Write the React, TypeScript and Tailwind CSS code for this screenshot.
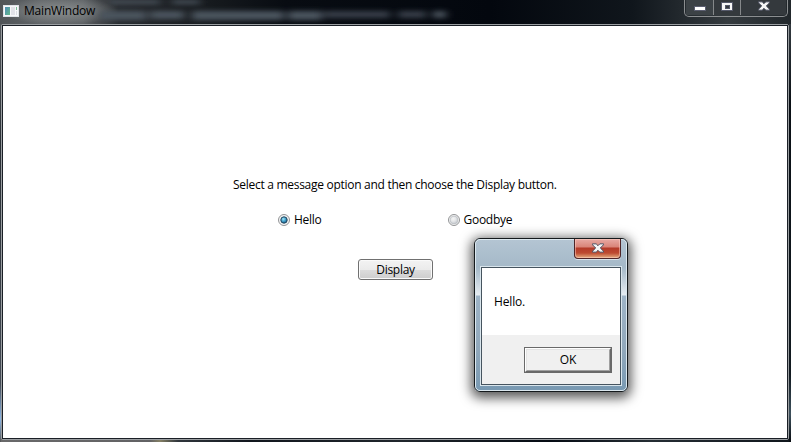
import React from "react";

function AppIcon() {
  return (
    <svg className="ml-[3px] mt-[5px] block" width="16" height="12" viewBox="0 0 16 12" shapeRendering="crispEdges">
      <defs>
        <linearGradient id="pane" x1="0" y1="0" x2="1" y2="1">
          <stop offset="0" stopColor="#4f8bb5" />
          <stop offset="1" stopColor="#62b98a" />
        </linearGradient>
      </defs>
      <rect width="16" height="12" fill="#dfe3e8" />
      <rect x="1" y="1" width="14" height="10" fill="#f6f7f9" />
      <rect x="2" y="2" width="5" height="8" fill="url(#pane)" />
      <rect x="8" y="2" width="4" height="8" fill="#e1e2e8" />
      <rect x="13" y="2" width="1" height="3" fill="#79bd96" />
      <rect x="13" y="6" width="1" height="4" fill="#d9dce2" />
    </svg>
  );
}

function Cross({ dark = "#42485a" }: { dark?: string }) {
  const d = "M0 0h4l2 2 2-2h4v1L8.500 4.500 12 8v1H8L6 7 4 9H0V8l3.500-3.500L0 1z";
  return (
    <svg className="block" width="12" height="10" viewBox="-0.500 -0.500 13 10">
      <path d={d} fill="#f5f5f5" stroke={dark} strokeWidth="1" />
    </svg>
  );
}

function GlassSmudges() {
  return (
    <svg className="absolute left-0 top-0" width="791" height="24" viewBox="0 0 791 24">
      <defs>
        <filter id="soft" filterUnits="userSpaceOnUse" x="0" y="-20" width="791" height="70">
          <feGaussianBlur stdDeviation="4 2.500" />
        </filter>
        <linearGradient id="glass" x1="0" y1="0" x2="1" y2="0">
          <stop offset="0" stopColor="#505457" />
          <stop offset="0.050" stopColor="#606467" />
          <stop offset="0.105" stopColor="#5e6265" />
          <stop offset="0.150" stopColor="#26292d" />
          <stop offset="0.280" stopColor="#14181c" />
          <stop offset="0.360" stopColor="#080c12" />
          <stop offset="0.620" stopColor="#03070e" />
          <stop offset="0.800" stopColor="#10161c" />
          <stop offset="0.920" stopColor="#353b3f" />
          <stop offset="1" stopColor="#22282c" />
        </linearGradient>
        <radialGradient id="halo">
          <stop offset="0" stopColor="#969a9b" stopOpacity="0.850" />
          <stop offset="0.600" stopColor="#85898a" stopOpacity="0.500" />
          <stop offset="1" stopColor="#85898a" stopOpacity="0" />
        </radialGradient>
      </defs>
      <rect width="791" height="24" fill="url(#glass)" />
      <ellipse cx="60" cy="11" rx="58" ry="14" fill="url(#halo)" />
      <g filter="url(#soft)" fill="#4b555f">
        <rect x="110" y="0" width="50" height="4" />
        <rect x="172" y="0" width="28" height="4" />
        <rect x="100" y="11" width="46" height="9" />
        <rect x="150" y="11" width="34" height="8" />
        <rect x="192" y="11" width="92" height="9" />
        <rect x="288" y="11" width="34" height="9" />
        <rect x="324" y="11" width="66" height="7" opacity="0.700" />
        <rect x="398" y="11" width="28" height="7" opacity="0.700" />
        <rect x="433" y="11" width="13" height="7" />
      </g>
    </svg>
  );
}

function Caption() {
  return (
    <header className="relative flex h-6 shrink-0 justify-between">
      <GlassSmudges />
      <div className="relative flex">
        <AppIcon />
        <span className="ml-[5px] mt-[3px] text-[12px] leading-4 tracking-[-0.200px] text-black">MainWindow</span>
      </div>
      <div className="relative mr-[3px] flex h-[17px] w-[104px] rounded-b-[5px] border border-t-0 border-[#8b8e90] p-px pt-0">
        <div className="flex w-[28px] justify-center border-r border-[#85888a] bg-[#3c4246]">
          <span className="mt-[6px] h-[5px] w-3 border border-[#5b5e70] bg-white" />
        </div>
        <div className="flex w-[27px] justify-center border-r border-[#85888a] bg-[#34393d]">
          <svg className="mt-[2px]" width="12" height="9" shapeRendering="crispEdges">
            <path fillRule="evenodd" d="M.5 .5h11v8H.5z M4 3v3h4V3z" fill="#f7f7f7" stroke="#55596a" />
          </svg>
        </div>
        <div className="flex flex-1 justify-center bg-[#34393d] pt-px">
          <Cross />
        </div>
      </div>
    </header>
  );
}

function Radio({ label, checked = false }: { label: string; checked?: boolean }) {
  return (
    <label className="flex h-4 w-[169.500px] items-center">
      <svg className="shrink-0" width="12" height="12" viewBox="0 0 12 12">
        <defs>
          <radialGradient id={checked ? "dot-on" : "dot-off"} cx="0.4" cy="0.35" r="0.65">
            <stop offset="0" stopColor={checked ? "#a7e7fa" : "#f5f5f5"} />
            <stop offset="0.5" stopColor={checked ? "#45a6cf" : "#e4e6e8"} />
            <stop offset="1" stopColor={checked ? "#155b88" : "#c5c9ce"} />
          </radialGradient>
        </defs>
        <circle cx="6" cy="6" r="5.500" fill="#f4f4f4" stroke="#929496" />
        <circle
          cx="6"
          cy="6"
          r={checked ? 3.2 : 3.9}
          fill={checked ? "url(#dot-on)" : "url(#dot-off)"}
          stroke={checked ? "#24475f" : "#b9bdc2"}
          strokeWidth={checked ? 1 : 0.7}
        />
      </svg>
      <span className="ml-1 text-[12px] leading-4 tracking-[-0.280px]">{label}</span>
    </label>
  );
}

function MessageBox() {
  return (
    <section className="absolute left-[474px] top-[238px] flex h-[154px] w-[154px] flex-col rounded-[6px] border border-[#14191c] bg-[linear-gradient(180deg,#b4c5d3_0,#a5b9c8_28px,#b5c6d3_36px,#e6ecf1_56px,#9eb4c7_57px,#91a8bb_110px,#7899b2_100%)] shadow-[0_3px_12px_3px_rgba(0,0,0,0.65)]">
      <div className="flex h-full flex-col rounded-[5px] border border-[#dce8ef] px-1 pb-1">
        <div className="-mt-px flex h-[27px] shrink-0 justify-end pr-px">
          <button className="flex h-5 w-[47px] justify-center rounded-b-[4px] border border-t-0 border-[#4e2528] bg-[linear-gradient(180deg,#e8aaa4_0,#d98478_8px,#b43a29_9px,#bd4a30_14px,#e4ae80_19px)] pt-1 shadow-[inset_0_0_0_1px_rgba(255,210,200,0.5),0_1px_0_#d7e3eb]">
            <Cross />
          </button>
        </div>
        <div className="flex flex-1 flex-col border border-[#d9e5ec]">
          <div className="flex flex-1 flex-col border border-[#46545f] bg-white">
            <div className="h-[67px] pl-3 pt-[26px] text-[12px] leading-4 tracking-[-0.150px]">Hello.</div>
            <div className="flex flex-1 justify-end bg-[#f0f0f0] pr-2 pt-3">
              <button className="h-[26px] w-[88px] border border-[#696969] text-[12px] leading-4">
                <span className="flex h-full items-center justify-center border border-b-[#696969] border-l-white border-r-[#696969] border-t-white">
                  <span className="flex h-full w-full items-center justify-center border border-b-[#a0a0a0] border-l-[#e3e3e3] border-r-[#a0a0a0] border-t-[#e3e3e3]">
                    OK
                  </span>
                </span>
              </button>
            </div>
          </div>
        </div>
      </div>
    </section>
  );
}

export default function App() {
  return (
    <div className="relative flex h-[442px] w-[791px] flex-col overflow-hidden bg-[#050a10] font-['Open_Sans','Noto_Sans',sans-serif] text-black">
      <Caption />
      <div className="flex h-[418px] bg-[linear-gradient(90deg,#69696a_0,#626264_150px,#858065_160px,#30363c_178px,#11161d_250px,#20262c_400px,#050b13_550px,#252d34_650px,#10161c_100%)]">
        <div className="w-px bg-[linear-gradient(180deg,#555a5e_0,#292f35_120px,#444b55_360px,#8ab5e5_395px,#555_100%)]" />
        <main className="h-[416px] w-[788px] rounded-[2px] border border-[#9b9fa2]">
          <div className="h-full border border-[#1a1f26] bg-white">
            <p className="ml-[230px] mt-[151px] whitespace-nowrap text-[12px] leading-4 tracking-[-0.285px]">
              Select a message option and then choose the Display button.
            </p>
            <div className="ml-[275px] mt-[19px] flex">
              <Radio label="Hello" checked />
              <Radio label="Goodbye" />
            </div>
            <button className="ml-[355px] mt-[31px] flex h-[21px] w-[75px] items-center justify-center rounded-[3px] border border-[#707070] bg-[linear-gradient(180deg,#f3f3f3_0,#ebebeb_50%,#dddddd_51%,#cdcdcd_100%)] text-[12px] leading-4 tracking-[-0.280px] shadow-[inset_0_0_0_1px_#fafafa]">
              Display
            </button>
          </div>
        </main>
        <div className="w-[2px] bg-[linear-gradient(180deg,#343b40_0,#0a1015_80px,#121a20_350px,#3e515d_390px,#080c10_100%)]" />
      </div>
      <MessageBox />
    </div>
  );
}
